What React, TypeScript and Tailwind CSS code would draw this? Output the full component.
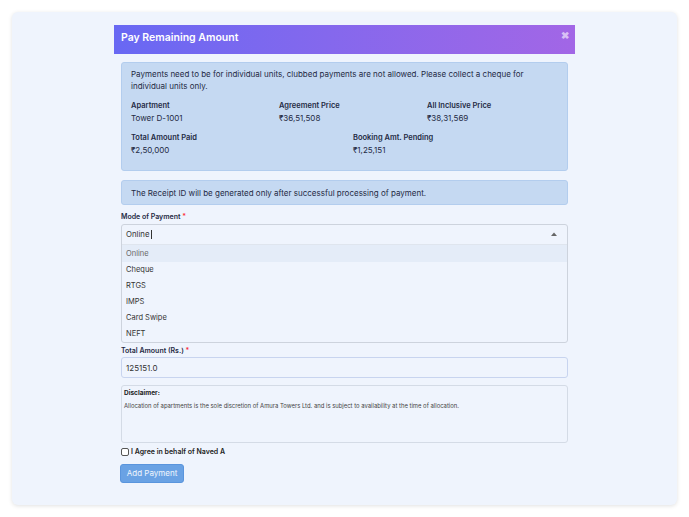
const OPTIONS = ["Online", "Cheque", "RTGS", "IMPS", "Card Swipe", "NEFT"];

function Info({ label, value }: { label: string; value: string }) {
  return (
    <div className="flex flex-col gap-[1px]">
      <span className="text-[7.5px] font-semibold leading-[10px] text-[#1f2a44]">{label}</span>
      <span className="text-[8px] leading-[12px] text-[#1f2a44]">{value}</span>
    </div>
  );
}

export default function App() {
  return (
    <div
      className="h-[517px] w-[689px] bg-white p-3"
      style={{ fontFamily: "Inter, 'Noto Sans', sans-serif" }}
    >
      <div className="h-[493px] w-[665px] rounded-md bg-[#eff4fd] pl-[102px] pt-[13px] shadow-[0_1px_4px_rgba(0,0,0,0.12)]">
        <div className="w-[461px]">
          {/* Header */}
          <div className="relative flex h-[29px] items-center bg-gradient-to-r from-[#6868f3] to-[#a266e6] px-[7px] pb-[4px]">
            <span className="text-[10.5px] font-semibold text-white">Pay Remaining Amount</span>
            <span className="absolute right-[6px] top-[5px] text-[10px] font-black leading-none text-white/60">✖</span>
          </div>

          <div className="px-[7px] pt-2">
            {/* Info alert */}
            <div className="rounded-[3px] border border-[#b3cdee] bg-[#c5d9f2] px-[9px] pb-[14px] pt-[5px] text-[#1f2a44]">
              <p className="text-[8px] leading-[12px]">
                Payments need to be for individual units, clubbed payments are not allowed. Please collect a cheque for
                individual units only.
              </p>
              <div className="mt-[9px] grid grid-cols-[148px_148px_148px]">
                <Info label="Apartment" value="Tower D-1001" />
                <Info label="Agreement Price" value="₹36,51,508" />
                <Info label="All Inclusive Price" value="₹38,31,569" />
              </div>
              <div className="mt-[9px] grid grid-cols-[222px_222px]">
                <Info label="Total Amount Paid" value="₹2,50,000" />
                <Info label="Booking Amt. Pending" value="₹1,25,151" />
              </div>
            </div>

            <div className="mt-[9px] flex h-[25px] items-center rounded-[3px] border border-[#b3cdee] bg-[#c5d9f2] px-[9px] text-[8px] text-[#1f2a44]">
              The Receipt ID will be generated only after successful processing of payment.
            </div>

            {/* Mode of payment */}
            <div className="mt-[7px] text-[7px] font-semibold leading-[10px] text-[#1f2a44]">
              Mode of Payment <span className="text-red-500">*</span>
            </div>
            <div className="mt-[2px] rounded-[3px] border border-[#cdd3dd] bg-[#eff4fd]">
              <div className="flex h-[19px] items-center justify-between pl-[4px] pr-[10px] text-[7.8px] text-[#333]">
                <span>
                  Online<span className="ml-px inline-block h-[9px] w-px translate-y-[2px] bg-[#333]" />
                </span>
                <svg width="6" height="4" viewBox="0 0 6 4" className="mb-[1px]">
                  <polygon points="0,4 3,0.5 6,4" fill="#666" />
                </svg>
              </div>
              <div className="border-t border-[#dfe5ee]">
                {OPTIONS.map((o, i) => (
                  <div
                    key={o}
                    className={[
                      "flex items-center pl-[4px] text-[7.5px]",
                      i === 0 ? "h-[17px] bg-[#e4ecf8] text-[#666]" : "h-[16px] text-[#333]",
                    ].join(" ")}
                  >
                    {o}
                  </div>
                ))}
              </div>
            </div>

            {/* Total amount */}
            <div className="mt-[3px] text-[7px] font-semibold leading-[10px] text-[#1f2a44]">
              Total Amount (Rs.) <span className="text-red-500">*</span>
            </div>
            <div className="mt-[1px] flex h-[21px] items-center rounded-[3px] border border-[#c8d4ef] bg-[#eff4fd] pl-[4px] text-[8px] text-[#333]">
              125151.0
            </div>

            {/* Disclaimer */}
            <div className="mt-[7px] h-[58px] rounded-[3px] border border-[#d4dbe6] px-[2px] pt-[3px]">
              <div className="text-[6.5px] font-bold text-[#222]">Disclaimer:</div>
              <div className="mt-[3px] text-[5.9px] text-[#444]">
                Allocation of apartments is the sole discretion of Amura Towers Ltd. and is subject to availability at the time of allocation.
              </div>
            </div>

            <div className="mt-[4px] flex items-center gap-[2px]">
              <span className="inline-block h-[8px] w-[8px] rounded-[2px] border border-[#555] bg-white" />
              <span className="text-[7px] font-semibold text-[#222]">I Agree in behalf of Naved A</span>
            </div>

            <button className="mt-[6px] ml-[-1px] h-[19px] w-[64px] rounded-[3px] border border-[#5a95dd] bg-[#6aa2e4] text-[8px] text-white/90">
              Add Payment
            </button>
          </div>
        </div>
      </div>
    </div>
  );
}
